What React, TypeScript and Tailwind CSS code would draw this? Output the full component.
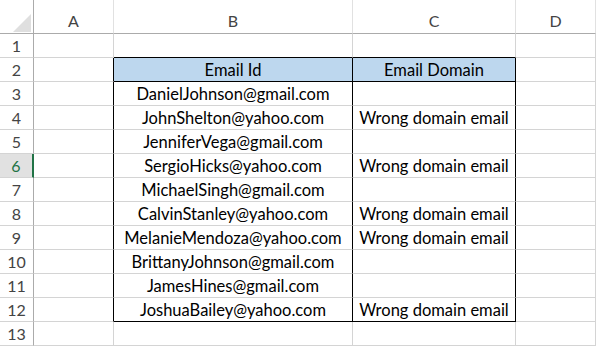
const rows: [string, string][] = [
  ["", ""],
  ["Email Id", "Email Domain"],
  ["DanielJohnson@gmail.com", ""],
  ["JohnShelton@yahoo.com", "Wrong domain email"],
  ["JenniferVega@gmail.com", ""],
  ["SergioHicks@yahoo.com", "Wrong domain email"],
  ["MichaelSingh@gmail.com", ""],
  ["CalvinStanley@yahoo.com", "Wrong domain email"],
  ["MelanieMendoza@yahoo.com", "Wrong domain email"],
  ["BrittanyJohnson@gmail.com", ""],
  ["JamesHines@gmail.com", ""],
  ["JoshuaBailey@yahoo.com", "Wrong domain email"],
  ["", ""],
];

const font = { fontFamily: "Lato, 'Open Sans', sans-serif" };

const cell = "flex h-[24px] items-end justify-center pb-[1px] text-[16.5px] leading-[20px] text-black";

export default function App() {
  return (
    <div className="h-[347px] w-[596px] overflow-hidden bg-white" style={font}>
      {/* column headers */}
      <div className="grid grid-cols-[34px_80px_239px_163px_80px] h-[34px]">
        <div className="relative border-r border-b border-[#ababab]">
          <div
            className="absolute left-[13px] top-[14px] h-[18px] w-[18px] bg-[#dfdfdf]"
            style={{ clipPath: "polygon(100% 0, 100% 100%, 0 100%)" }}
          />
        </div>
        {["A", "B", "C", "D"].map((c) => (
          <div
            key={c}
            className="flex items-center justify-center border-r border-r-[#e1e1e1] border-b border-b-[#ababab] pt-[8px] text-[16px] text-[#444]"
          >
            {c}
          </div>
        ))}
      </div>

      {rows.map(([b, c], i) => {
        const r = i + 1;
        const active = r === 6;
        const inTable = r >= 2 && r <= 12;
        const headRow = r === 2;
        const aRight = inTable ? "border-r-black" : "border-r-[#d4d4d4]";
        let bBottom = "border-b-[#d4d4d4]";
        if (r === 1 || r === 2 || r === 12) bBottom = "border-b-black";
        const bRight = inTable ? "border-r-black" : "border-r-[#d4d4d4]";
        const fill = headRow ? "bg-[#bdd7ee]" : "";
        return (
          <div key={r} className="grid grid-cols-[34px_80px_239px_163px_80px]">
            <div
              className={
                active
                  ? "flex h-[24px] items-end justify-center border-b border-b-[#d4d4d4] border-r-2 border-r-[#217346] bg-[#e1e1e1] pb-[1px] text-[16px] leading-[20px] text-[#217346]"
                  : "flex h-[24px] items-end justify-center border-b border-b-[#d4d4d4] border-r border-r-[#ababab] pb-[1px] text-[16px] leading-[20px] text-[#444]"
              }
            >
              {r}
            </div>
            <div className={"h-[24px] border-b border-b-[#d4d4d4] border-r " + aRight} />
            <div className={cell + " border-b border-r " + bBottom + " " + bRight + " " + fill}>{b}</div>
            <div className={cell + " border-b border-r " + bBottom + " " + bRight + " " + fill}>{c}</div>
            <div className="h-[24px] border-b border-b-[#d4d4d4] border-r border-r-[#d4d4d4]" />
          </div>
        );
      })}
    </div>
  );
}
